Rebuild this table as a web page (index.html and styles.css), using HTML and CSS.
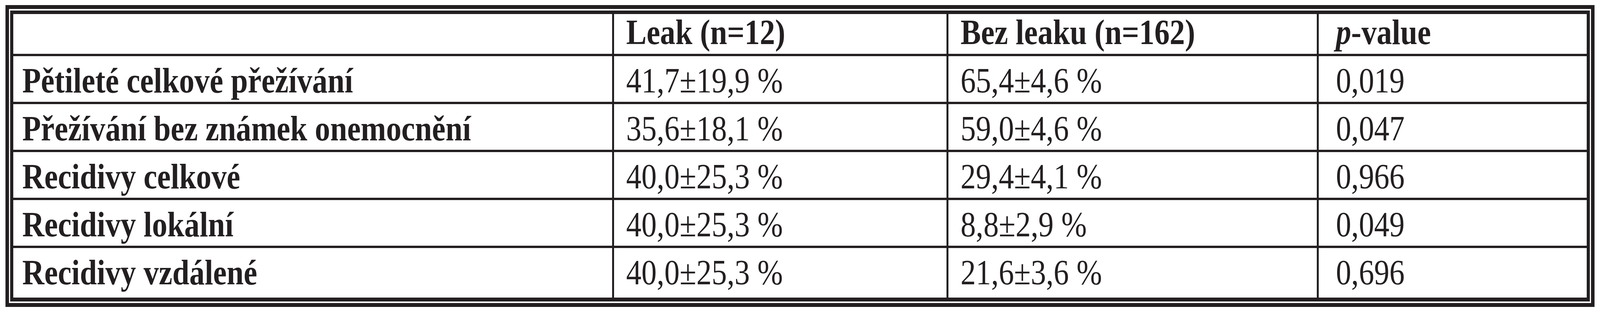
FILE: index.html
```html
<!DOCTYPE html>
<html lang="cs">
<head>
<meta charset="utf-8">
<title>Leak – přežívání a recidivy</title>
<link rel="stylesheet" href="styles.css">
</head>
<body>
<div class="frame">
  <table class="results">
    <thead>
      <tr>
        <th class="c-label"></th>
        <th class="c-leak"><span class="t">Leak (n=12)</span></th>
        <th class="c-noleak"><span class="t">Bez leaku (n=162)</span></th>
        <th class="c-p"><span class="t"><i>p</i>-value</span></th>
      </tr>
    </thead>
    <tbody>
      <tr>
        <th><span class="t">Pětileté celkové přežívání</span></th>
        <td><span class="t">41,7±19,9 %</span></td>
        <td><span class="t">65,4±4,6 %</span></td>
        <td><span class="t">0,019</span></td>
      </tr>
      <tr>
        <th><span class="t">Přežívání bez známek onemocnění</span></th>
        <td><span class="t">35,6±18,1 %</span></td>
        <td><span class="t">59,0±4,6 %</span></td>
        <td><span class="t">0,047</span></td>
      </tr>
      <tr>
        <th><span class="t">Recidivy celkové</span></th>
        <td><span class="t">40,0±25,3 %</span></td>
        <td><span class="t">29,4±4,1 %</span></td>
        <td><span class="t">0,966</span></td>
      </tr>
      <tr>
        <th><span class="t">Recidivy lokální</span></th>
        <td><span class="t">40,0±25,3 %</span></td>
        <td><span class="t">8,8±2,9 %</span></td>
        <td><span class="t">0,049</span></td>
      </tr>
      <tr>
        <th><span class="t">Recidivy vzdálené</span></th>
        <td><span class="t">40,0±25,3 %</span></td>
        <td><span class="t">21,6±3,6 %</span></td>
        <td><span class="t">0,696</span></td>
      </tr>
    </tbody>
  </table>
</div>
</body>
</html>
```

FILE: styles.css
```css
html,
body {
  margin: 0;
  padding: 0;
  background: #ffffff;
}

body {
  font-family: "Liberation Serif", "Times New Roman", serif;
  color: #231f20;
}

/* Double-ruled frame around the table */
.frame {
  display: inline-block;
  vertical-align: top;
  margin: 13px 0 0 14px;
  border: 10px solid #231f20;
  border-left-width: 9px;
  border-right-width: 9px;
  padding: 4px 3px;
}

.results {
  box-sizing: border-box;
  width: 4044px;
  table-layout: fixed;
  border-collapse: separate;
  border-spacing: 0;
  border: 10px solid #231f20;
  border-top-width: 9px;
  border-left-width: 8px;
  border-right-width: 8px;
  font-size: 92px;
  line-height: 92px;
}

.results th,
.results td {
  box-sizing: border-box;
  padding: 16px 0 9px 31px;
  border-right: 5px solid #231f20;
  border-bottom: 6px solid #231f20;
  text-align: left;
  vertical-align: top;
  white-space: nowrap;
  font-weight: normal;
}

/* The typeset table is horizontally condensed */
.t {
  display: inline-block;
  transform: scaleX(0.8498);
  transform-origin: 0 50%;
}

.results thead th {
  font-weight: bold;
  padding-top: 0;
  padding-bottom: 10px;
}

.results tbody th {
  font-weight: bold;
  padding-left: 23px;
}

.results .c-label { width: 1538px; padding-left: 23px; }
.results .c-leak { width: 856px; }
.results .c-noleak { width: 948px; }
.results .c-p { width: 686px; }

.results tr > :last-child {
  border-right: 0;
  padding-left: 44px;
}

.results tbody tr:last-child > * {
  border-bottom: 0;
  padding-bottom: 19px;
}
```
